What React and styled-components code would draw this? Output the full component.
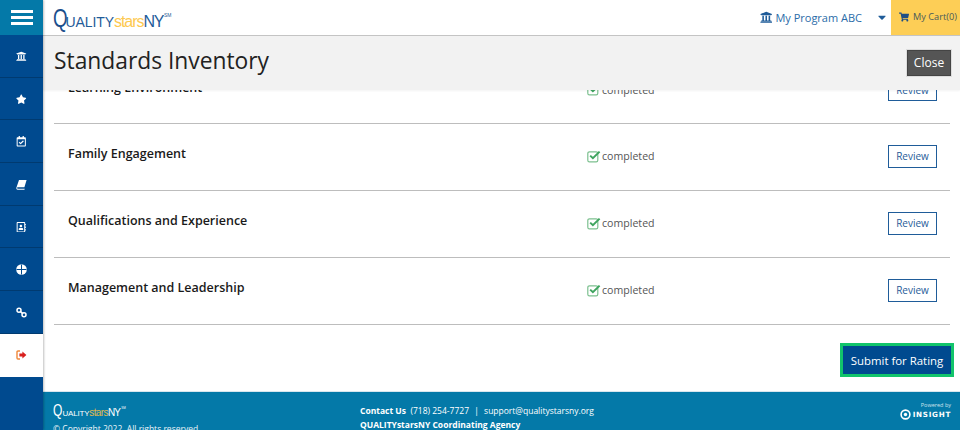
import React from "react";
import styled, { createGlobalStyle } from "styled-components";
import {
  FaUniversity,
  FaStar,
  FaRegCalendarCheck,
  FaRegAddressBook,
  FaShoppingCart,
  FaCaretDown,
} from "react-icons/fa";

const GlobalStyle = createGlobalStyle`
  html, body {
    margin: 0;
    padding: 0;
    background: #fff;
    font-family: "Open Sans", "Liberation Sans", sans-serif;
  }
  * { box-sizing: border-box; }
`;

const Page = styled.div`
  display: flex;
  width: 960px;
  height: 430px;
  overflow: hidden;
`;

const Sidebar = styled.nav`
  flex: 0 0 43px;
  display: flex;
  flex-direction: column;
  background: #004a8f;
  box-shadow: 1px 0 2px rgba(0, 0, 0, 0.25);
  z-index: 3;
`;

const Burger = styled.div`
  height: 35px;
  background: #0479a8;
  display: flex;
  flex-direction: column;
  justify-content: center;
  align-items: center;
  gap: 3px;
  span {
    display: block;
    width: 22px;
    height: 3px;
    background: #fff;
  }
`;

const NavItem = styled.div`
  height: 42.7px;
  padding-top: 1px;
  display: flex;
  align-items: center;
  justify-content: center;
  font-size: 10.5px;
  color: #fff;
  background: ${(p) => (p.$active ? "#fff" : "transparent")};
  border-bottom: 1px solid ${(p) => (p.$active ? "#fff" : "#003a70")};
`;

const Main = styled.div`
  flex: 1;
  min-width: 0;
  display: flex;
  flex-direction: column;
`;

const Header = styled.header`
  height: 36px;
  flex: none;
  display: flex;
  align-items: stretch;
  justify-content: space-between;
  background: #fff;
  border-bottom: 1px solid #c4c4c4;
  padding-left: 10px;
  position: relative;
  z-index: 2;
`;

const Logo = styled.div`
  display: flex;
  align-items: baseline;
  color: ${(p) => (p.$light ? "#fff" : "#1f5c99")};
  font-family: "Liberation Sans", sans-serif;
  font-size: ${(p) => (p.$light ? 8 : 14)}px;
  letter-spacing: ${(p) => (p.$light ? -0.2 : -0.1)}px;
  line-height: 1;
  b {
    display: inline-block;
    font-weight: 400;
    font-size: ${(p) => (p.$light ? 16 : 25)}px;
    letter-spacing: 0;
    transform: scaleX(0.75);
    transform-origin: left;
    margin-right: ${(p) => (p.$light ? -3 : -7)}px;
    color: ${(p) => (p.$light ? "#fff" : "#1b4f8c")};
  }
  i {
    font-style: normal;
    font-size: ${(p) => (p.$light ? 10 : 16)}px;
    letter-spacing: ${(p) => (p.$light ? -0.6 : -1)}px;
    color: ${(p) => (p.$light ? "#e0b94f" : "#fdc94f")};
  }
  em {
    font-style: normal;
    font-size: ${(p) => (p.$light ? 10 : 16)}px;
    letter-spacing: ${(p) => (p.$light ? -0.8 : -1.4)}px;
  }
  sup {
    font-size: ${(p) => (p.$light ? 3 : 5)}px;
    align-self: flex-start;
    margin-top: ${(p) => (p.$light ? 4 : 7)}px;
    margin-left: 1px;
    letter-spacing: 0;
  }
`;

const HeaderLogo = styled.div`
  display: flex;
  align-items: center;
  padding-top: 1px;
`;

const HeaderRight = styled.div`
  display: flex;
  align-items: stretch;
`;

const Program = styled.div`
  display: flex;
  align-items: center;
  color: #2a6ca8;
  font-size: 11px;
  padding-bottom: 1px;
  svg:first-child {
    font-size: 12.5px;
    margin-right: 3px;
    color: #1f5c99;
  }
`;

const Caret = styled.span`
  display: flex;
  margin: 0 0 0 14px;
  width: 15px;
  font-size: 9px;
  color: #1f5c99;
`;

const Cart = styled.div`
  width: 69px;
  background: #fdce56;
  color: #4a5a5a;
  font-size: 9.2px;
  display: flex;
  align-items: center;
  gap: 4px;
  padding: 0 0 2px 8px;
  white-space: nowrap;
  svg {
    color: #1f4f85;
    font-size: 10px;
  }
`;

const TitleBar = styled.div`
  height: 54px;
  flex: none;
  display: flex;
  align-items: center;
  justify-content: space-between;
  background: #f2f2f2;
  padding: 0 9px 0 11px;
  box-shadow: 0 1px 2px rgba(0, 0, 0, 0.05);
  position: relative;
  z-index: 1;
`;

const Title = styled.h1`
  margin: 0;
  font-size: 22.8px;
  font-weight: 400;
  color: #222;
  padding-bottom: 6px;
`;

const CloseButton = styled.button`
  width: 44px;
  height: 26px;
  padding: 0;
  margin-bottom: 1px;
  background: #555;
  color: #fff;
  border: 1px solid #444;
  outline: 1px solid #ddd;
  font-family: inherit;
  font-size: 12px;
`;

const Content = styled.main`
  flex: 1;
  min-height: 0;
  overflow: hidden;
  padding: 0 10px 0 11px;
  background: #fff;
  display: flex;
  flex-direction: column;
`;

const List = styled.div`
  margin-top: -32px;
  flex: none;
`;

const Row = styled.div`
  height: 67px;
  display: grid;
  grid-template-columns: 519px 1fr auto;
  align-items: center;
  border-bottom: 1px solid #bdbdbd;
  padding: 0 13px 0 14px;
  &:first-child {
    height: 66px;
  }
`;

const RowName = styled.div`
  font-size: 12.5px;
  font-weight: 600;
  color: #1a1a1a;
  padding-bottom: 7px;
`;

const Status = styled.div`
  display: flex;
  align-items: center;
  gap: 1px;
  font-size: 10.6px;
  color: #555;
  padding-bottom: 2px;
`;

const ReviewButton = styled.button`
  width: 49px;
  height: 23px;
  padding: 0;
  margin-bottom: 2px;
  background: #fff;
  border: 1px solid #1f5c99;
  color: #1f5c99;
  font-family: inherit;
  font-size: 10px;
`;

const Actions = styled.div`
  display: flex;
  justify-content: flex-end;
  margin: 18px -4px 0 0;
`;

const SubmitButton = styled.button`
  width: 114px;
  height: 34px;
  padding: 0;
  background: #004a8f;
  border: 3px solid #12c46b;
  color: #fff;
  font-family: inherit;
  font-size: 11.4px;
`;

const Footer = styled.footer`
  height: 39px;
  flex: none;
  background: #0479a8;
  color: #fff;
  display: grid;
  grid-template-columns: 307px 1fr auto;
  padding: 12px 9px 0 10px;
  overflow: hidden;
  font-size: 8.5px;
  line-height: 14px;
  box-shadow: inset 0 1px 0 #d8e6ee;
`;

const Copy = styled.div`
  margin-top: 3px;
  white-space: nowrap;
  color: #e8f2f7;
`;

const Contact = styled.div`
  padding-top: 1px;
  white-space: nowrap;
  strong {
    font-weight: 700;
  }
`;

const Sep = styled.span`
  margin: 0 3px;
`;

const Powered = styled.div`
  display: flex;
  flex-direction: column;
  align-items: flex-end;
  margin-top: -1px;
  font-size: 5.5px;
  line-height: 7px;
  color: #cfe3ec;
`;

const Insight = styled.div`
  display: flex;
  align-items: center;
  gap: 2px;
  font-family: "DejaVu Sans", sans-serif;
  font-weight: 700;
  font-size: 7.2px;
  line-height: 11px;
  letter-spacing: 0.7px;
  color: #fff;
`;

const rows = [
  "Learning Environment",
  "Family Engagement",
  "Qualifications and Experience",
  "Management and Leadership",
];

const CheckIcon = () => (
  <svg width="14" height="13" viewBox="0 0 14 13">
    <rect x="0.8" y="1.8" width="10" height="10" rx="1.6" fill="none" stroke="#7cc08f" strokeWidth="1.2" />
    <path d="M3.2 5.6 L5.9 8.2 L12.6 1.6" fill="none" stroke="#3fa45f" strokeWidth="2" />
  </svg>
);

const BookIcon = () => (
  <svg width="11" height="11" viewBox="0 0 11 11">
    <path d="M3 1 H10.6 L8.4 8.2 H1.8 Q1 8.2 1 9 Q1 9.8 2 9.8 H8.8 L8.4 10.8 H1.6 Q0.2 10.8 0.3 9 Z" fill="#fff" />
  </svg>
);

const GlobeIcon = () => (
  <svg width="11" height="11" viewBox="0 0 11 11">
    <circle cx="5.5" cy="5.5" r="5.3" fill="#fff" />
    <path d="M0.5 5.5 H10.5 M5.5 0.5 V10.5" stroke="#004a8f" strokeWidth="1" />
  </svg>
);

const ChainIcon = () => (
  <svg width="11" height="11" viewBox="0 0 11 11">
    <circle cx="3" cy="3.2" r="2" fill="none" stroke="#fff" strokeWidth="1.5" />
    <circle cx="8" cy="7.8" r="2" fill="none" stroke="#fff" strokeWidth="1.5" />
    <path d="M4 4.2 L7 6.8" stroke="#fff" strokeWidth="1.6" />
  </svg>
);

const LogoutIcon = () => (
  <svg width="11" height="10" viewBox="0 0 11 10">
    <path d="M4 1 H2 Q1 1 1 2 V8 Q1 9 2 9 H4" fill="none" stroke="#f0883a" strokeWidth="1.4" />
    <path d="M3.4 3.6 H6.4 V1.4 L10.4 5 L6.4 8.6 V6.4 H3.4 Z" fill="#d9201e" />
  </svg>
);

const navIcons = [
  <FaUniversity />,
  <FaStar />,
  <FaRegCalendarCheck />,
  <BookIcon />,
  <FaRegAddressBook />,
  <GlobeIcon />,
  <ChainIcon />,
];

const App = () => (
  <Page>
    <GlobalStyle />
    <Sidebar>
      <Burger>
        <span />
        <span />
        <span />
      </Burger>
      {navIcons.map((icon, i) => (
        <NavItem key={i}>{icon}</NavItem>
      ))}
      <NavItem $active>
        <LogoutIcon />
      </NavItem>
    </Sidebar>
    <Main>
      <Header>
        <HeaderLogo>
          <Logo>
            <b>Q</b>UALITY<i>stars</i>
            <em>NY</em>
            <sup>SM</sup>
          </Logo>
        </HeaderLogo>
        <HeaderRight>
          <Program>
            <FaUniversity />
            My Program ABC
            <Caret>
              <FaCaretDown />
            </Caret>
          </Program>
          <Cart>
            <FaShoppingCart />
            My Cart(0)
          </Cart>
        </HeaderRight>
      </Header>
      <TitleBar>
        <Title>Standards Inventory</Title>
        <CloseButton>Close</CloseButton>
      </TitleBar>
      <Content>
        <List>
          {rows.map((name) => (
            <Row key={name}>
              <RowName>{name}</RowName>
              <Status>
                <CheckIcon />
                completed
              </Status>
              <ReviewButton>Review</ReviewButton>
            </Row>
          ))}
        </List>
        <Actions>
          <SubmitButton>Submit for Rating</SubmitButton>
        </Actions>
      </Content>
      <Footer>
        <div>
          <Logo $light>
            <b>Q</b>UALITY<i>stars</i>
            <em>NY</em>
            <sup>SM</sup>
          </Logo>
          <Copy>© Copyright 2022. All rights reserved.</Copy>
        </div>
        <Contact>
          <strong>Contact Us</strong>&nbsp; (718) 254-7727 <Sep>|</Sep> support@qualitystarsny.org
          <br />
          <strong>QUALITYstarsNY Coordinating Agency</strong>
        </Contact>
        <Powered>
          Powered by
          <Insight>
            <svg width="11" height="11" viewBox="0 0 11 11">
              <circle cx="5.5" cy="5.5" r="4.4" fill="none" stroke="#fff" strokeWidth="1.6" />
              <circle cx="5.5" cy="5.5" r="1.7" fill="#fff" />
            </svg>
            INSIGHT
          </Insight>
        </Powered>
      </Footer>
    </Main>
  </Page>
);

export default App;
